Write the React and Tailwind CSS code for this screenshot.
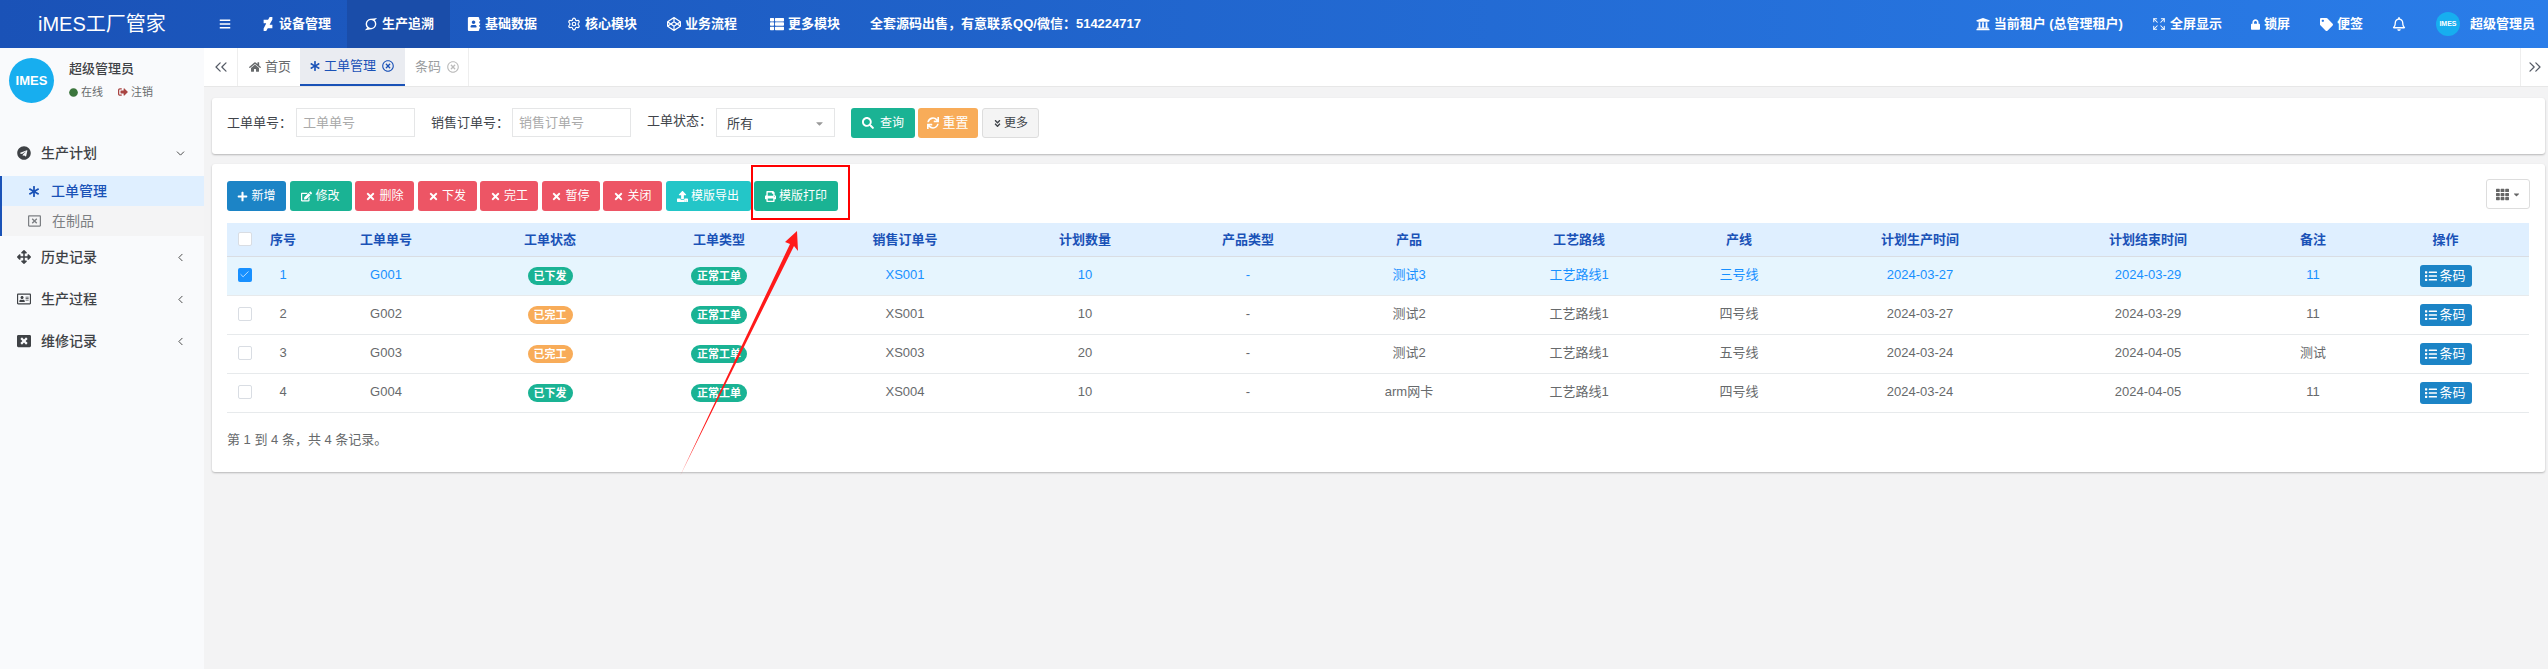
import {
  FaAddressBook, FaAngleDoubleDown, FaAsterisk, FaArrowsAlt, FaBars, FaCaretDown, FaCircle, FaCodepen,
  FaDeviantart, FaEdit, FaHome, FaList, FaLock, FaPlus, FaPrint, FaRegAddressCard, FaRegBell, FaRegTimesCircle,
  FaSearch, FaSignOutAlt, FaSuperpowers, FaSync, FaTag, FaTelegram, FaTh, FaThList, FaTimes, FaUniversity,
  FaUpload, FaWindowClose, FaRegWindowClose,
} from "react-icons/fa";
import { Check, ChevronDown, ChevronLeft, ChevronsLeft, ChevronsRight, Expand, Settings } from "lucide-react";

const navItems = [
  { label: "设备管理", icon: FaDeviantart, pad: "pr-[16px]" },
  { label: "生产追溯", icon: FaSuperpowers, pad: "pr-[16px]", active: true },
  { label: "基础数据", icon: FaAddressBook, pad: "pr-[13px]" },
  { label: "核心模块", icon: Settings, pad: "pr-[13px]" },
  { label: "业务流程", icon: FaCodepen, pad: "pr-[16px]" },
  { label: "更多模块", icon: FaThList, pad: "pr-[16px]" },
];

const toolbarButtons = [
  { label: "新增", icon: FaPlus, color: "bg-[#1c84c6]", width: "w-[59px]" },
  { label: "修改", icon: FaEdit, color: "bg-[#1ab394]", width: "w-[62px]" },
  { label: "删除", icon: FaTimes, color: "bg-[#ed5565]", width: "w-[59px]" },
  { label: "下发", icon: FaTimes, color: "bg-[#ed5565]", width: "w-[59px]" },
  { label: "完工", icon: FaTimes, color: "bg-[#ed5565]", width: "w-[58px]" },
  { label: "暂停", icon: FaTimes, color: "bg-[#ed5565]", width: "w-[58px]" },
  { label: "关闭", icon: FaTimes, color: "bg-[#ed5565]", width: "w-[59px]" },
  { label: "模版导出", icon: FaUpload, color: "bg-[#23c6c8]", width: "w-[85px]" },
  { label: "模版打印", icon: FaPrint, color: "bg-[#1ab394]", width: "w-[84px]" },
];

const columns = [
  { label: "序号", width: "w-[42px]" },
  { label: "工单单号", width: "w-[164px]" },
  { label: "工单状态", width: "w-[164px]" },
  { label: "工单类型", width: "w-[174px]" },
  { label: "销售订单号", width: "w-[198px]" },
  { label: "计划数量", width: "w-[162px]" },
  { label: "产品类型", width: "w-[164px]" },
  { label: "产品", width: "w-[158px]" },
  { label: "工艺路线", width: "w-[182px]" },
  { label: "产线", width: "w-[138px]" },
  { label: "计划生产时间", width: "w-[224px]" },
  { label: "计划结束时间", width: "w-[232px]" },
  { label: "备注", width: "w-[98px]" },
  { label: "操作", width: "" },
];

const rows = [
  { id: 1, no: "G001", issued: true, order: "XS001", qty: 10, product: "测试3", line: "三号线", start: "2024-03-27", end: "2024-03-29", note: "11", selected: true },
  { id: 2, no: "G002", issued: false, order: "XS001", qty: 10, product: "测试2", line: "四号线", start: "2024-03-27", end: "2024-03-29", note: "11" },
  { id: 3, no: "G003", issued: false, order: "XS003", qty: 20, product: "测试2", line: "五号线", start: "2024-03-24", end: "2024-04-05", note: "测试" },
  { id: 4, no: "G004", issued: true, order: "XS004", qty: 10, product: "arm网卡", line: "四号线", start: "2024-03-24", end: "2024-04-05", note: "11" },
];

const Avatar = ({ size, text }) => (
  <div className={`flex shrink-0 items-center justify-center rounded-full bg-[#17aeef] font-black text-white ${size} ${text}`}>
    IMES
  </div>
);

const SideItem = ({ icon: Icon, label, open }) => (
  <div className="flex h-[42px] items-center pl-[17px] pr-[17px] text-[14px] font-medium text-[#3f4246]">
    <Icon className="w-[14px] shrink-0 text-[14px]" />
    <span className="ml-[10px] flex-1">{label}</span>
    {open ? (
      <ChevronDown size={13} strokeWidth={1.75} className="text-[#444]" />
    ) : (
      <ChevronLeft size={13} strokeWidth={1.75} className="text-[#444]" />
    )}
  </div>
);

const Header = () => (
  <header className="flex h-[48px] items-center bg-gradient-to-r from-[#1a52b7] to-[#2a7de9] text-[13px] font-bold text-white">
    <div className="w-[204px] shrink-0 pl-[38px] text-[20px] font-normal leading-[48px]">iMES工厂管家</div>
    <FaBars className="ml-[15px] mr-[13px] w-[12px] text-[12px]" />
    {navItems.map((item) => (
      <div
        key={item.label}
        className={`flex h-[48px] items-center pl-[17px] ${item.pad} ${item.active ? "bg-[#1a4da9]" : ""}`}
      >
        <item.icon size={14} className="mr-[4px] w-[14px] shrink-0" />
        {item.label}
      </div>
    ))}
    <span className="ml-[14px]">全套源码出售，有意联系QQ/微信：514224717</span>
    <div className="ml-auto flex items-center pr-[13px]">
      <FaUniversity className="mr-[4px] text-[14px]" />
      <span>当前租户 (总管理租户)</span>
      <Expand size={14} strokeWidth={1.75} className="ml-[29px] mr-[4px]" />
      <span>全屏显示</span>
      <FaLock className="ml-[29px] mr-[4px] w-[9px] text-[11px]" />
      <span>锁屏</span>
      <FaTag className="ml-[30px] mr-[4px] text-[13px]" />
      <span>便签</span>
      <FaRegBell className="ml-[29px] text-[14px]" />
      <Avatar size="ml-[30px] h-[24px] w-[24px]" text="text-[7px]" />
      <span className="ml-[10px]">超级管理员</span>
    </div>
  </header>
);

const Sidebar = () => (
  <aside className="h-[621px] w-[204px] shrink-0 bg-[#f9fafc]">
    <div className="flex h-[84px] pl-[9px] pt-[10px]">
      <Avatar size="h-[45px] w-[45px]" text="text-[13px]" />
      <div className="ml-[15px]">
        <div className="text-[13px] font-medium leading-[22px] text-[#3f4246]">超级管理员</div>
        <div className="mt-[1px] flex items-center text-[11px] leading-[22px] text-[#676a6c]">
          <FaCircle className="mr-[3px] text-[9px] text-[#3c763d]" />
          在线
          <FaSignOutAlt className="ml-[15px] mr-[3px] text-[10px] text-[#a94442]" />
          注销
        </div>
      </div>
    </div>
    <SideItem icon={FaTelegram} label="生产计划" open />
    <div className="mt-[2px] border-l-2 border-[#1a52b7]">
      <div className="flex h-[30px] items-center bg-[#dfefff] pl-[26px] text-[14px] font-medium text-[#1a52b7]">
        <FaAsterisk className="mr-[11px] w-[12px] text-[11px]" />
        工单管理
      </div>
      <div className="flex h-[30px] items-center bg-[#f4f4f5] pl-[26px] text-[14px] text-[#7c7f83]">
        <FaRegWindowClose className="mr-[11px] w-[13px] text-[14px]" />
        在制品
      </div>
    </div>
    <SideItem icon={FaArrowsAlt} label="历史记录" />
    <SideItem icon={FaRegAddressCard} label="生产过程" />
    <SideItem icon={FaWindowClose} label="维修记录" />
  </aside>
);

const TabsBar = () => (
  <div className="flex h-[39px] items-stretch border-b border-[#e7e7e7] bg-white text-[13px] text-[#676a6c]">
    <div className="flex w-[34px] items-center justify-center border-r border-[#eeeeee]">
      <ChevronsLeft size={20} strokeWidth={1.5} className="text-[#555b66]" />
    </div>
    <div className="flex w-[62px] items-center pl-[11px]">
      <FaHome className="mr-[4px] text-[12px]" />
      首页
    </div>
    <div className="flex w-[105px] items-center border-b-2 border-[#1a52b7] bg-[#eaecf1] pl-[10px] text-[#1a52b7]">
      <FaAsterisk className="mr-[4px] text-[10px]" />
      工单管理
      <FaRegTimesCircle className="ml-[6px] text-[12px]" />
    </div>
    <div className="flex w-[64px] items-center border-r border-[#eeeeee] pl-[10px] text-[#9a9da0]">
      条码
      <FaRegTimesCircle className="ml-[6px] text-[12px] text-[#bbbbbb]" />
    </div>
    <div className="ml-auto flex w-[28px] items-center justify-center border-l border-[#eeeeee]">
      <ChevronsRight size={20} strokeWidth={1.5} className="text-[#555b66]" />
    </div>
  </div>
);

const FilterCard = () => (
  <div className="flex h-[56px] items-start rounded-[3px] bg-white pl-[15px] pt-[10px] text-[13px] text-[#40444a] shadow-[0_1px_2px_rgba(0,0,0,0.25)]">
    <label className="w-[69px] leading-[29px]">工单单号：</label>
    <input
      placeholder="工单单号"
      className="h-[29px] w-[119px] border border-[#e5e6e7] px-[6px] text-[13px] outline-none placeholder:text-[#aaaaaa]"
    />
    <label className="ml-[16px] w-[81px] leading-[29px]">销售订单号：</label>
    <input
      placeholder="销售订单号"
      className="h-[29px] w-[119px] border border-[#e5e6e7] px-[6px] text-[13px] outline-none placeholder:text-[#aaaaaa]"
    />
    <label className="ml-[16px] w-[69px] leading-[26px]">工单状态：</label>
    <div className="flex h-[29px] w-[119px] items-center justify-between border border-[#e5e6e7] pl-[10px] pr-[9px] pt-[2px]">
      所有
      <FaCaretDown className="text-[11px] text-[#999999]" />
    </div>
    <button className="ml-[16px] flex h-[30px] w-[64px] items-center justify-center rounded-[3px] bg-[#1ab394] text-[12px] text-white">
      <FaSearch className="mr-[6px] text-[12px]" />
      查询
    </button>
    <button className="ml-[3px] flex h-[30px] w-[60px] items-center justify-center rounded-[3px] bg-[#f8ac59] text-[13px] text-white">
      <FaSync className="mr-[3px] text-[12px]" />
      重置
    </button>
    <button className="ml-[4px] flex h-[30px] w-[57px] items-center justify-center rounded-[3px] border border-[#dddddd] bg-[#f4f4f4] text-[12px] text-[#40444a]">
      <FaAngleDoubleDown className="mr-[2px] text-[9px]" />
      更多
    </button>
  </div>
);

const Pill = ({ color, width, children }) => (
  <span className={`inline-flex h-[18px] items-center justify-center rounded-full text-[11px] font-bold text-white ${color} ${width}`}>
    {children}
  </span>
);

const Checkbox = ({ checked }) =>
  checked ? (
    <span className="mx-auto flex h-[14px] w-[14px] items-center justify-center rounded-[2px] bg-[#1890ff]">
      <Check size={11} strokeWidth={1.5} className="text-white" />
    </span>
  ) : (
    <span className="mx-auto block h-[14px] w-[14px] rounded-[2px] border border-[#d9dde3] bg-white" />
  );

const OrderTable = () => (
  <table className="w-[2302px] table-fixed border-collapse text-center text-[13px]">
    <thead>
      <tr className="h-[33px] border-b border-[#d9dde3] bg-[#dfefff] text-[#1a52b7]">
        <th className="w-[35px]">
          <Checkbox />
        </th>
        {columns.map((col) => (
          <th key={col.label} className={`font-bold ${col.width}`}>
            {col.label}
          </th>
        ))}
      </tr>
    </thead>
    <tbody>
      {rows.map((row) => (
        <tr
          key={row.id}
          className={`h-[39px] border-b border-[#e7eaec] ${row.selected ? "bg-[#e6f5fe] text-[#1890ff]" : "text-[#676a6c]"}`}
        >
          <td className="pb-[2px]">
            <Checkbox checked={row.selected} />
          </td>
          <td className="pb-[2px]">{row.id}</td>
          <td className="pb-[2px]">{row.no}</td>
          <td>
            <Pill color={row.issued ? "bg-[#1ab394]" : "bg-[#f8ac59]"} width="w-[45px]">
              {row.issued ? "已下发" : "已完工"}
            </Pill>
          </td>
          <td>
            <Pill color="bg-[#1ab394]" width="w-[56px]">正常工单</Pill>
          </td>
          <td className="pb-[2px]">{row.order}</td>
          <td className="pb-[2px]">{row.qty}</td>
          <td className="pb-[2px]">-</td>
          <td className="pb-[2px]">{row.product}</td>
          <td className="pb-[2px]">工艺路线1</td>
          <td className="pb-[2px]">{row.line}</td>
          <td className="pb-[2px]">{row.start}</td>
          <td className="pb-[2px]">{row.end}</td>
          <td className="pb-[2px]">{row.note}</td>
          <td>
            <button className="mx-auto flex h-[22px] w-[52px] items-center justify-center rounded-[3px] bg-[#1c84c6] text-[13px] text-white">
              <FaList className="mr-[2px] text-[12px]" />
              条码
            </button>
          </td>
        </tr>
      ))}
    </tbody>
  </table>
);

const TableCard = () => (
  <div className="mt-[10px] h-[308px] rounded-[3px] bg-white px-[15px] pt-[17px] shadow-[0_1px_2px_rgba(0,0,0,0.25)]">
    <div className="flex items-start">
      <div className="flex gap-[3.5px]">
        {toolbarButtons.map((btn) => (
          <button
            key={btn.label}
            className={`flex h-[30px] items-center justify-center rounded-[3px] text-[12px] text-white ${btn.color} ${btn.width}`}
          >
            <btn.icon className="mr-[3px] text-[11px]" />
            {btn.label}
          </button>
        ))}
      </div>
      <button className="ml-auto -mt-[2px] flex h-[30px] w-[44px] items-center justify-center gap-[3px] rounded-[3px] border border-[#dddddd] bg-white text-[#666666]">
        <FaTh className="text-[13px]" />
        <FaCaretDown className="text-[9px]" />
      </button>
    </div>
    <div className="mt-[12px]">
      <OrderTable />
    </div>
    <p className="mt-[18px] text-[13px] leading-[18px] text-[#676a6c]">第 1 到 4 条，共 4 条记录。</p>
  </div>
);

export default function App() {
  return (
    <div className="relative h-[669px] w-[2548px] overflow-hidden bg-[#f3f3f4] font-['Liberation_Sans','Noto_Sans_CJK_SC',sans-serif]">
      <Header />
      <div className="flex">
        <Sidebar />
        <main className="min-w-0 flex-1">
          <TabsBar />
          <div className="pl-[8px] pr-[3px] pt-[11px]">
            <FilterCard />
            <TableCard />
          </div>
        </main>
      </div>
      {/* annotation drawn over the screenshot */}
      <div className="absolute left-[751px] top-[165px] h-[55px] w-[99px] border-2 border-[#ff0000]" />
      <svg className="absolute left-0 top-0" width="2548" height="669">
        <polygon points="680,476 790,244 785,242 797,231 798,251 794,246" fill="#ff1a1a" />
      </svg>
    </div>
  );
}
